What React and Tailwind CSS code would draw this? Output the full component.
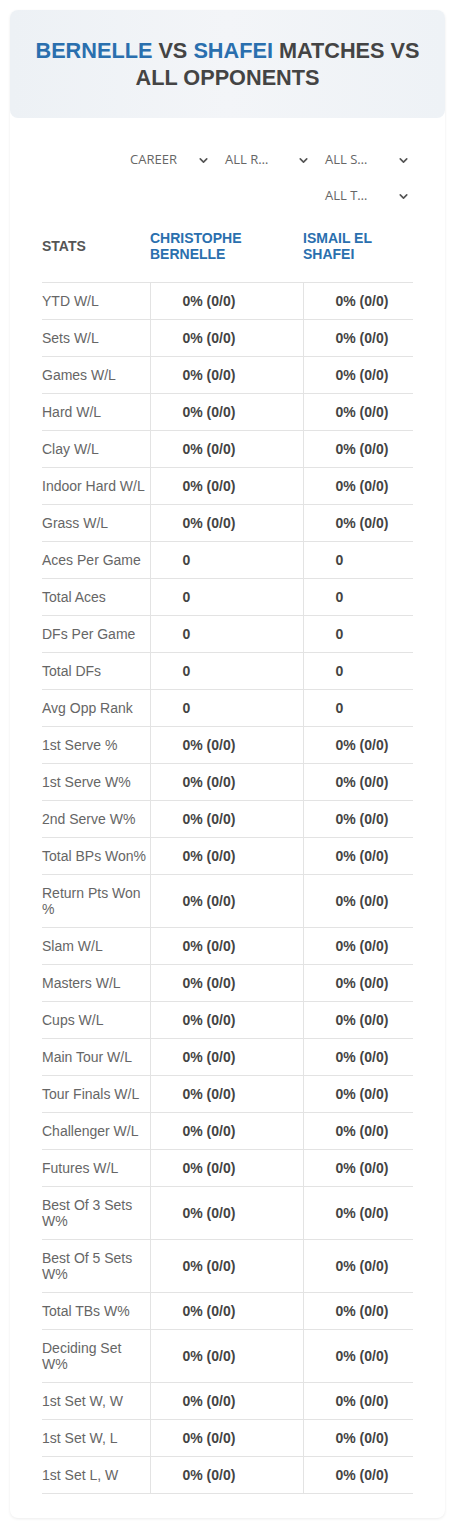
import { ChevronDown } from 'lucide-react'

const pct = '0% (0/0)'

const rows = [
  ['YTD W/L', pct],
  ['Sets W/L', pct],
  ['Games W/L', pct],
  ['Hard W/L', pct],
  ['Clay W/L', pct],
  ['Indoor Hard W/L', pct],
  ['Grass W/L', pct],
  ['Aces Per Game', '0'],
  ['Total Aces', '0'],
  ['DFs Per Game', '0'],
  ['Total DFs', '0'],
  ['Avg Opp Rank', '0'],
  ['1st Serve %', pct],
  ['1st Serve W%', pct],
  ['2nd Serve W%', pct],
  ['Total BPs Won%', pct],
  ['Return Pts Won %', pct],
  ['Slam W/L', pct],
  ['Masters W/L', pct],
  ['Cups W/L', pct],
  ['Main Tour W/L', pct],
  ['Tour Finals W/L', pct],
  ['Challenger W/L', pct],
  ['Futures W/L', pct],
  ['Best Of 3 Sets W%', pct],
  ['Best Of 5 Sets W%', pct],
  ['Total TBs W%', pct],
  ['Deciding Set W%', pct],
  ['1st Set W, W', pct],
  ['1st Set W, L', pct],
  ['1st Set L, W', pct],
]

function Select({ label, first }) {
  return (
    <div className={`${first ? 'w-[95px] pl-[12px]' : 'w-[100px] pl-3'} h-9 flex items-center justify-between pr-[3px] text-[13px] text-[#666] font-['Open_Sans',sans-serif]`}>
      <span>{label}</span>
      <ChevronDown size={13} strokeWidth={3} className="text-[#555]" />
    </div>
  )
}

export default function App() {
  return (
    <div className="bg-white min-h-[1528px] px-[10px] pt-[10px] font-['Liberation_Sans',Arial,sans-serif]">
      <div className="rounded-lg shadow-[0_1px_3px_rgba(0,0,0,0.08)] pb-6">
        <div className="rounded-lg bg-gradient-to-r from-[#edf1f5] via-[#f3f5f8] to-[#eef2f6] px-4 py-[27px] text-center">
          <h1 className="text-[21.7px] leading-[27px] font-bold uppercase text-[#444]">
            <span className="text-[#2a6fae]">Bernelle</span> vs{' '}
            <span className="text-[#2a6fae]">Shafei</span> matches vs all opponents
          </h1>
        </div>

        <div className="mx-[32px] mt-[24px]">
          <div className="flex flex-wrap justify-end">
            <Select label="CAREER" first />
            <Select label="ALL R…" />
            <Select label="ALL S…" />
            <Select label="ALL T…" />
          </div>

          <table className="w-full table-fixed border-collapse mt-[11px] text-[14px] leading-4">
            <colgroup>
              <col className="w-[108px]" />
              <col className="w-[153px]" />
              <col />
            </colgroup>
            <thead>
              <tr className="border-b border-[#e3e3e3]">
                <th className="pt-[5px] pb-[20px] text-left font-bold text-[#555]">STATS</th>
                <th className="pt-[5px] pb-[20px] text-left font-bold text-[#2a6fae]">CHRISTOPHE BERNELLE</th>
                <th className="pt-[5px] pb-[20px] text-left font-bold text-[#2a6fae]">ISMAIL EL SHAFEI</th>
              </tr>
            </thead>
            <tbody>
              {rows.map(([label, v]) => (
                <tr key={label} className="border-b border-[#e3e3e3]">
                  <td className="py-[10px] text-[#666]">{label}</td>
                  <td className="py-[10px] pl-[32px] border-l border-[#e3e3e3] font-bold text-[#444]">{v}</td>
                  <td className="py-[10px] pl-[32px] border-l border-[#e3e3e3] font-bold text-[#444]">{v}</td>
                </tr>
              ))}
            </tbody>
          </table>
        </div>
      </div>
    </div>
  )
}
